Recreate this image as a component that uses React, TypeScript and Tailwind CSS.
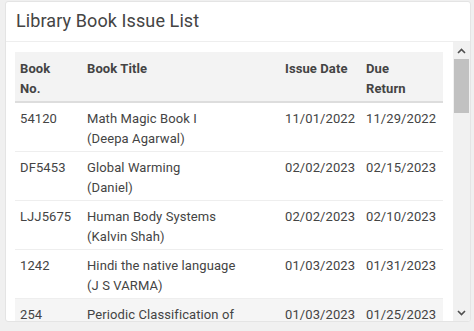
const issues = [
  { no: "54120", title: "Math Magic Book I", author: "(Deepa Agarwal)", issued: "11/01/2022", due: "11/29/2022" },
  { no: "DF5453", title: "Global Warming", author: "(Daniel)", issued: "02/02/2023", due: "02/15/2023" },
  { no: "LJJ5675", title: "Human Body Systems", author: "(Kalvin Shah)", issued: "02/02/2023", due: "02/10/2023" },
  { no: "1242", title: "Hindi the native language", author: "(J S VARMA)", issued: "01/03/2023", due: "01/31/2023" },
  { no: "254", title: "Periodic Classification of", author: "", issued: "01/03/2023", due: "01/25/2023" },
];

function Chevron({ up }: { up?: boolean }) {
  return (
    <svg width="9" height="6" viewBox="0 0 9 6" className="text-[#505050]">
      <polyline
        points={up ? "1,5 4.5,1.5 8,5" : "1,1 4.5,4.5 8,1"}
        fill="none"
        stroke="currentColor"
        strokeWidth="1.6"
      />
    </svg>
  );
}

export default function App() {
  return (
    <div className="w-[474px] h-[331px] bg-[#f0f0f0] pt-px pl-[5px] font-['Roboto',sans-serif] text-[#444]">
      <div className="w-[466px] h-[321px] bg-white border border-[#e4e4e4] rounded-[3px] flex flex-col overflow-hidden">
        <div className="h-[40px] shrink-0 border-b border-[#eeeeee] pl-[10px] pt-[8px]">
          <h1 className="text-[18px] leading-[22px] text-[#444] tracking-[0.1px]">Library Book Issue List</h1>
        </div>
        <div className="flex flex-1 min-h-0">
          <div className="flex-1 overflow-hidden pt-[10px] pl-[9px] pr-[10px]">
            <table className="w-[428px] table-fixed border-collapse text-[13px] leading-[19.5px] tracking-[0.1px]">
              <colgroup>
                <col className="w-[67px]" />
                <col className="w-[198px]" />
                <col className="w-[81px]" />
                <col className="w-[82px]" />
              </colgroup>
              <thead>
                <tr className="bg-[#f3f3f3] border-b-2 border-[#dddddd] text-left font-bold text-[#444]">
                  <th className="pl-[5px] pt-[7px] pb-[3px] align-top">Book<br />No.</th>
                  <th className="pl-[5px] pt-[7px] pb-[3px] align-top">Book Title</th>
                  <th className="pl-[5px] pt-[7px] pb-[3px] align-top whitespace-nowrap">Issue Date</th>
                  <th className="pl-[5px] pt-[7px] pb-[3px] align-top">Due<br />Return</th>
                </tr>
              </thead>
              <tbody>
                {issues.map((b, i) => (
                  <tr key={b.no} className={`${i > 0 ? "border-t border-[#eeeeee]" : ""} ${i === 4 ? "bg-[#f5f5f5]" : ""}`}>
                    <td className="pl-[5px] pt-[6px] pb-[3px] align-top">{b.no}</td>
                    <td className="pl-[5px] pt-[6px] pb-[3px] align-top">
                      <div>{b.title}</div>
                      {b.author && <div>{b.author}</div>}
                    </td>
                    <td className="pl-[5px] pt-[6px] pb-[3px] align-top">{b.issued}</td>
                    <td className="pl-[5px] pt-[6px] pb-[3px] align-top">{b.due}</td>
                  </tr>
                ))}
              </tbody>
            </table>
          </div>
          <div className="w-[17px] shrink-0 bg-[#f1f1f1] flex flex-col">
            <div className="h-[17px] flex items-center justify-center">
              <Chevron up />
            </div>
            <div className="h-[54px] bg-[#c1c1c1] mx-[1px]" />
            <div className="flex-1" />
            <div className="h-[17px] flex items-center justify-center">
              <Chevron />
            </div>
          </div>
        </div>
      </div>
    </div>
  );
}
